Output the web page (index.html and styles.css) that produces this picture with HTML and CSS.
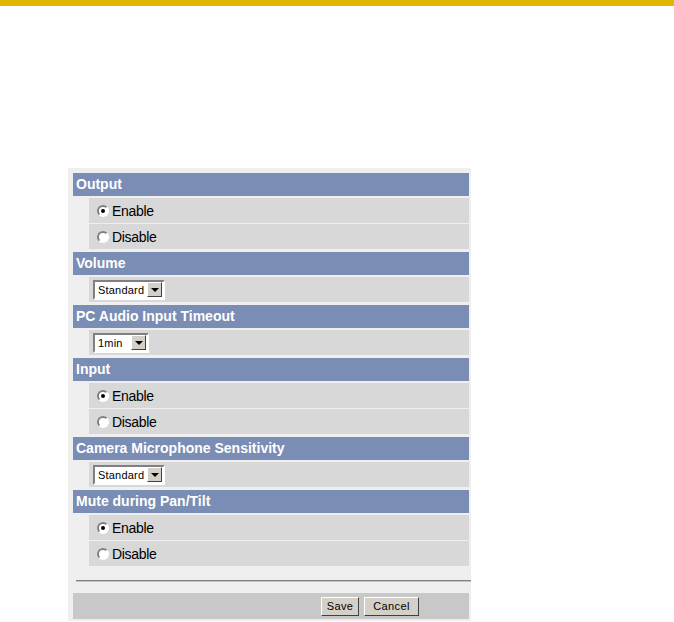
FILE: index.html
```html
<!DOCTYPE html>
<html lang="en">
<head>
    <meta charset="UTF-8">
    <meta name="viewport" content="width=device-width, initial-scale=1.0">
    <title>Audio Settings</title>
    <link rel="stylesheet" href="styles.css">
</head>
<body>
    <div class="topbar"></div>
    <div class="panel">
        <div class="section">
            <div class="heading">Output</div>
            <div class="row"><span class="radio checked"></span>Enable</div>
            <div class="row"><span class="radio"></span>Disable</div>
        </div>
        <div class="section">
            <div class="heading">Volume</div>
            <div class="row select-row">
                <span class="select" style="width: 72px;">Standard<span class="select-btn"></span></span>
            </div>
        </div>
        <div class="section">
            <div class="heading">PC Audio Input Timeout</div>
            <div class="row select-row">
                <span class="select" style="width: 56px;">1min<span class="select-btn"></span></span>
            </div>
        </div>
        <div class="section">
            <div class="heading">Input</div>
            <div class="row"><span class="radio checked"></span>Enable</div>
            <div class="row"><span class="radio"></span>Disable</div>
        </div>
        <div class="section">
            <div class="heading">Camera Microphone Sensitivity</div>
            <div class="row select-row">
                <span class="select" style="width: 72px;">Standard<span class="select-btn"></span></span>
            </div>
        </div>
        <div class="section">
            <div class="heading">Mute during Pan/Tilt</div>
            <div class="row"><span class="radio checked"></span>Enable</div>
            <div class="row"><span class="radio"></span>Disable</div>
        </div>
        <div class="divider"></div>
        <div class="footer">
            <button class="btn save">Save</button>
            <button class="btn cancel">Cancel</button>
        </div>
    </div>
</body>
</html>
```

FILE: styles.css
```css
/* General styling */
body {
    font-family: 'Liberation Sans', Arial, sans-serif;
    margin: 0;
    padding: 0;
    background: #fff;
}
.topbar {
    height: 6px;
    background: #dfb600;
}
.panel {
    width: 396px;
    margin: 162px 0 0 68px;
    padding: 5px 2px 2px 5px;
    background: #efefef;
}
.section {
    margin-bottom: 3px;
}
.heading {
    height: 23px;
    line-height: 23px;
    padding-left: 3px;
    margin-bottom: 2px;
    background: #7a8db4;
    color: #fff;
    font-size: 14px;
    font-weight: bold;
}
.row {
    display: flex;
    align-items: center;
    height: 25px;
    margin: 0 0 1px 16px;
    padding-left: 8px;
    background: #d8d8d8;
    font-size: 14px;
    letter-spacing: -0.3px;
    color: #000;
}
.row:last-child {
    margin-bottom: 0;
}
/* Classic radio button */
.radio {
    position: relative;
    width: 8px;
    height: 8px;
    margin-right: 3px;
    border: 2px solid;
    border-color: #808080 #fff #fff #808080;
    border-radius: 50%;
    background: #fff;
}
.radio.checked::after {
    content: "";
    position: absolute;
    left: 2px;
    top: 2px;
    width: 4px;
    height: 4px;
    border-radius: 50%;
    background: #000;
}
/* Dropdown box */
.select-row {
    padding-left: 4px;
}
.select {
    display: flex;
    align-items: center;
    justify-content: space-between;
    box-sizing: border-box;
    height: 20px;
    padding: 0 1px 0 3px;
    border: 2px solid;
    border-color: #808080 #fff #fff #808080;
    background: #fff;
    font-size: 11px;
    letter-spacing: 0.2px;
}
.select-btn {
    position: relative;
    box-sizing: border-box;
    width: 15px;
    height: 15px;
    border: 1px solid;
    border-color: #fff #404040 #404040 #fff;
    background: #d4d0c8;
}
.select-btn::after {
    content: "";
    position: absolute;
    left: 3px;
    top: 5px;
    border-left: 4px solid transparent;
    border-right: 4px solid transparent;
    border-top: 4px solid #000;
}
/* Footer style */
.divider {
    margin: 14px -2px 0 3px;
    border-top: 1px solid #7f7f7f;
    border-bottom: 1px solid #c4c4c4;
}
.footer {
    display: flex;
    align-items: center;
    gap: 5px;
    height: 26px;
    margin-top: 11px;
    padding-left: 248px;
    background: #c8c8c8;
}
.btn {
    height: 19px;
    padding: 0;
    border: 1px solid;
    border-color: #fff #404040 #404040 #fff;
    background: #d4d0c8;
    font-family: 'Liberation Sans', Arial, sans-serif;
    font-size: 11px;
    letter-spacing: 0.4px;
    color: #000;
}
.save {
    width: 38px;
}
.cancel {
    width: 55px;
}
```
